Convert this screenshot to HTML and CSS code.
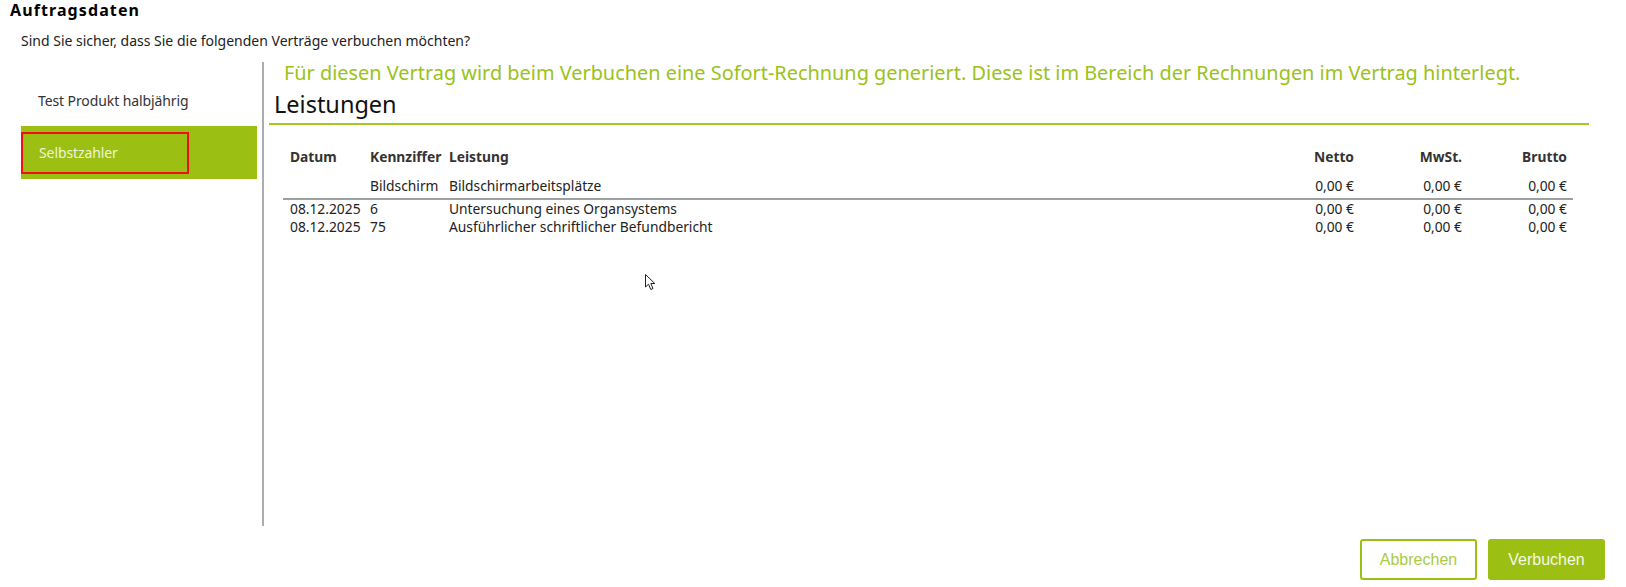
FILE: index.html
```html
<!DOCTYPE html>
<html lang="de">
<head>
  <meta charset="UTF-8">
  <title>Auftragsdaten</title>
  <link rel="stylesheet" href="styles.css">
</head>
<body>
  <h1 class="titel">Auftragsdaten</h1>
  <p class="frage">Sind Sie sicher, dass Sie die folgenden Verträge verbuchen möchten?</p>

  <!-- Vertragsliste links, Details rechts -->
  <div class="haupt">
    <div class="liste">
      <div class="eintrag">Test Produkt halbjährig</div>
      <div class="eintrag aktiv"><span class="markiert">Selbstzahler</span></div>
    </div>
    <div class="trenner"></div>
    <div class="inhalt">
      <p class="hinweis">Für diesen Vertrag wird beim Verbuchen eine Sofort-Rechnung generiert. Diese ist im Bereich der Rechnungen im Vertrag hinterlegt.</p>
      <h2 class="ueberschrift">Leistungen</h2>
      <table class="leistungen">
        <thead>
          <tr><th class="datum">Datum</th><th class="ziffer">Kennziffer</th><th>Leistung</th><th class="betrag netto">Netto</th><th class="betrag mwst">MwSt.</th><th class="betrag brutto">Brutto</th></tr>
        </thead>
        <tbody>
          <tr class="gruppe"><td></td><td>Bildschirm</td><td>Bildschirmarbeitsplätze</td><td class="betrag">0,00 €</td><td class="betrag">0,00 €</td><td class="betrag">0,00 €</td></tr>
          <tr><td>08.12.2025</td><td>6</td><td>Untersuchung eines Organsystems</td><td class="betrag">0,00 €</td><td class="betrag">0,00 €</td><td class="betrag">0,00 €</td></tr>
          <tr><td>08.12.2025</td><td>75</td><td>Ausführlicher schriftlicher Befundbericht</td><td class="betrag">0,00 €</td><td class="betrag">0,00 €</td><td class="betrag">0,00 €</td></tr>
        </tbody>
      </table>
    </div>
  </div>

  <div class="aktionen">
    <button class="knopf abbrechen">Abbrechen</button>
    <button class="knopf verbuchen">Verbuchen</button>
  </div>

  <!-- Mauszeiger aus dem Screenshot -->
  <svg class="zeiger" width="12" height="17" viewBox="0 0 12 17">
    <path d="M0.5 0.5 L0.5 13 L3.5 10.2 L5.8 15.5 L8 14.5 L5.8 9.5 L9.8 9.5 Z" fill="#fff" stroke="#222" stroke-width="1"/>
  </svg>
</body>
</html>
```

FILE: styles.css
```css
body {
  margin: 0;
  background: #fff;
  color: #222;
  font-family: 'Noto Sans', 'Open Sans', sans-serif;
  position: relative;
  height: 587px;
  overflow: hidden;
}

.titel {
  margin: 0;
  padding: 0 10px;
  font-size: 16px;
  font-weight: bold;
  line-height: 21px;
  letter-spacing: 1.1px;
  color: #000;
}

.frage {
  margin: 0;
  padding: 11px 0 0 21px;
  font-size: 14px;
  line-height: 18px;
  color: #222;
}

.haupt {
  display: flex;
  height: 464px;
  margin-top: 12px;
}

.liste {
  width: 236px;
  margin-left: 21px;
  padding-top: 12px;
}

.eintrag {
  height: 52px;
  display: flex;
  align-items: center;
  padding-left: 17px;
  font-size: 14px;
  letter-spacing: -0.1px;
  color: #333;
}

.eintrag.aktiv {
  background: #9bbf12;
  color: #eef4dc;
  padding-left: 0;
  height: 53px;
}

.markiert {
  display: flex;
  align-items: center;
  width: 148px;
  height: 38px;
  padding-left: 16px;
  border: 2px solid #f20d18;
}

.trenner {
  width: 2px;
  margin-left: 5px;
  background: #a9aeb1;
}

.inhalt {
  flex: 1;
  padding: 0 37px 0 5px;
}

.hinweis {
  margin: 0;
  padding: 0 0 0 15px;
  font-size: 19.9px;
  line-height: 22px;
  color: #9bc21a;
  white-space: nowrap;
}

.ueberschrift {
  margin: 0;
  padding: 5px 0 4px 5px;
  font-size: 23.5px;
  font-weight: normal;
  line-height: 30px;
  color: #111;
  border-bottom: 2px solid #a4c820;
}

.leistungen {
  width: calc(100% - 30px);
  margin: 18px 0 0 14px;
  border-collapse: collapse;
  font-size: 13.8px;
  color: #222;
}

.leistungen th,
.leistungen td {
  padding: 0 8px 0 0;
  text-align: left;
  white-space: nowrap;
}

.leistungen th:first-child,
.leistungen td:first-child {
  padding-left: 7px;
}

.leistungen th:last-child,
.leistungen td:last-child {
  padding-right: 6px;
}

.leistungen th:nth-child(2),
.leistungen td:nth-child(2) {
  padding-right: 4px;
}

.leistungen th {
  height: 26px;
  font-weight: bold;
  color: #333;
}

.leistungen td {
  height: 18px;
  line-height: 18px;
}

.leistungen .datum {
  width: 72px;
}

.leistungen .ziffer {
  width: 75px;
}

.leistungen .betrag {
  text-align: right;
}

.leistungen .netto {
  width: 92px;
}

.leistungen .mwst {
  width: 100px;
}

.leistungen .brutto {
  width: 97px;
}

.gruppe td {
  height: 26px;
  padding-bottom: 3px;
  vertical-align: bottom;
  border-bottom: 2px solid #9ba0a3;
}

.aktionen {
  display: flex;
  justify-content: flex-end;
  gap: 11px;
  padding: 13px 21px 0 0;
}

.knopf {
  width: 117px;
  height: 41px;
  border-radius: 3px;
  font-family: 'Liberation Sans', Arial, sans-serif;
  font-size: 16px;
  cursor: pointer;
}

.abbrechen {
  background: #fff;
  border: 2px solid #9bbf12;
  color: #a9cb45;
}

.verbuchen {
  background: #9bbf12;
  border: none;
  color: #f4f8e6;
}

.zeiger {
  position: absolute;
  left: 645px;
  top: 274px;
}
```
